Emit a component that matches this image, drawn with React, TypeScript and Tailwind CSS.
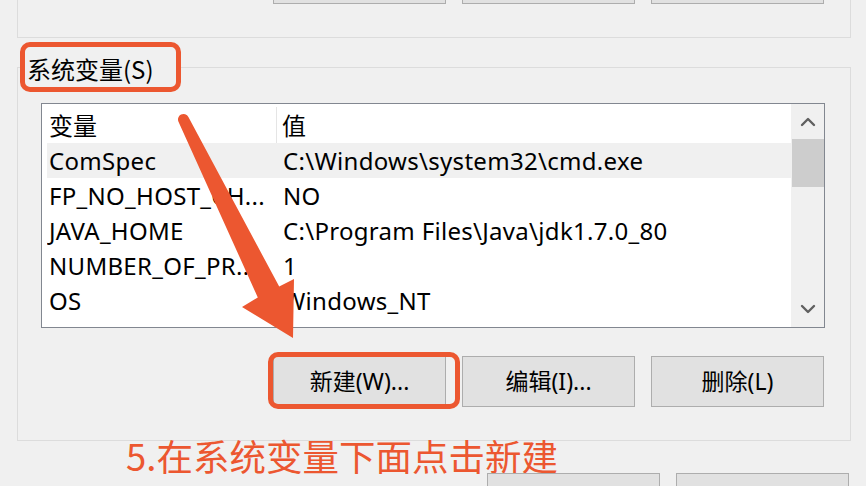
import React from 'react';
import { ChevronUp, ChevronDown } from 'lucide-react';

const rows: [string, string][] = [
  ['ComSpec', 'C:\\Windows\\system32\\cmd.exe'],
  ['FP_NO_HOST_CH...', 'NO'],
  ['JAVA_HOME', 'C:\\Program Files\\Java\\jdk1.7.0_80'],
  ['NUMBER_OF_PR...', '1'],
  ['OS', 'Windows_NT'],
];

const WinButton: React.FC<{ label?: string }> = ({ label }) => (
  <button className="w-[173px] h-[51px] shrink-0 bg-[#e1e1e1] border border-[#adadad] text-[23px] text-black flex items-center justify-center">
    {label}
  </button>
);

export default function App() {
  return (
    <div className="relative w-[866px] h-[486px] overflow-hidden bg-[#f0f0f0] font-['Noto_Sans','Noto_Sans_CJK_SC',sans-serif] text-black">
      {/* user variables box, only its bottom shows */}
      <div className="ml-[17px] w-[834px] h-[94px] mt-[-56px] border border-[#dcdcdc] flex justify-end gap-[16px] pt-[8px] pr-[26px]">
        <WinButton />
        <WinButton />
        <WinButton />
      </div>

      <fieldset className="ml-[17px] mt-[4px] w-[834px] border border-[#dcdcdc] pb-[33px]">
        <legend className="ml-[2px] h-[50px] w-[161px] border-[5px] border-[#ec5730] rounded-[10px] pl-[2px] pt-[5px] leading-[34px] text-[24px] font-['Noto_Sans_CJK_SC',sans-serif]">
          系统变量(S)
        </legend>

        <div className="mt-[11px] ml-[23px] w-[784px] h-[225px] border border-[#828790] bg-white flex">
          <div className="flex-1 flex flex-col pl-[5px] overflow-hidden">
            <div className="h-[39px] shrink-0 flex text-[24px] font-['Noto_Sans_CJK_SC',sans-serif] pt-[3px]">
              <div className="w-[230px] pl-[2px] flex items-center border-r border-[#e5e5e5]">变量</div>
              <div className="pl-[5px] flex items-center">值</div>
            </div>
            {rows.map(([name, value], i) => (
              <div
                key={name}
                className={`h-[35px] shrink-0 flex items-center text-[24px] tracking-[0.3px] whitespace-nowrap ${i === 0 ? 'bg-[#f0f0f0]' : ''}`}
              >
                <div className="w-[230px] pl-[2px] overflow-hidden">{name}</div>
                <div className="pl-[6px]">{value}</div>
              </div>
            ))}
          </div>
          <div className="w-[33px] shrink-0 bg-[#f0f0f0] flex flex-col items-center">
            <div className="h-[35px] w-full flex items-center justify-center">
              <ChevronUp size={24} strokeWidth={2.4} className="text-[#606060]" />
            </div>
            <div className="h-[48px] w-[32px] bg-[#cdcdcd]" />
            <div className="flex-1" />
            <div className="h-[36px] w-full flex items-center justify-center">
              <ChevronDown size={24} strokeWidth={2.4} className="text-[#606060]" />
            </div>
          </div>
        </div>

        <div className="mt-[28px] flex justify-end gap-[16px] pr-[26px]">
          <div className="relative">
            <WinButton label="新建(W)..." />
            <span className="absolute left-[-5px] top-[-4px] right-[-14px] bottom-[-2px] border-[5px] border-[#ec5730] rounded-[10px] pointer-events-none" />
          </div>
          <WinButton label="编辑(I)..." />
          <WinButton label="删除(L)" />
        </div>
      </fieldset>

      <div className="h-[32px] pl-[126px] text-[36.5px] leading-[30px] text-[#ec5730] font-['Noto_Sans_CJK_SC',sans-serif] whitespace-nowrap">
        5.在系统变量下面点击新建
      </div>

      <div className="flex justify-end gap-[16px] pr-[17px]">
        <WinButton />
        <WinButton />
      </div>

      {/* annotation arrow */}
      <svg className="absolute inset-0 pointer-events-none" width="866" height="486" viewBox="0 0 866 486">
        <path
          d="M188.4 117 L279.2 286.6 L294 279 L293 338 L242 307 L257.8 297.4 L178.6 122 A5.5 5.5 0 0 1 188.4 117 Z"
          fill="#ec5730"
        />
      </svg>
    </div>
  );
}
